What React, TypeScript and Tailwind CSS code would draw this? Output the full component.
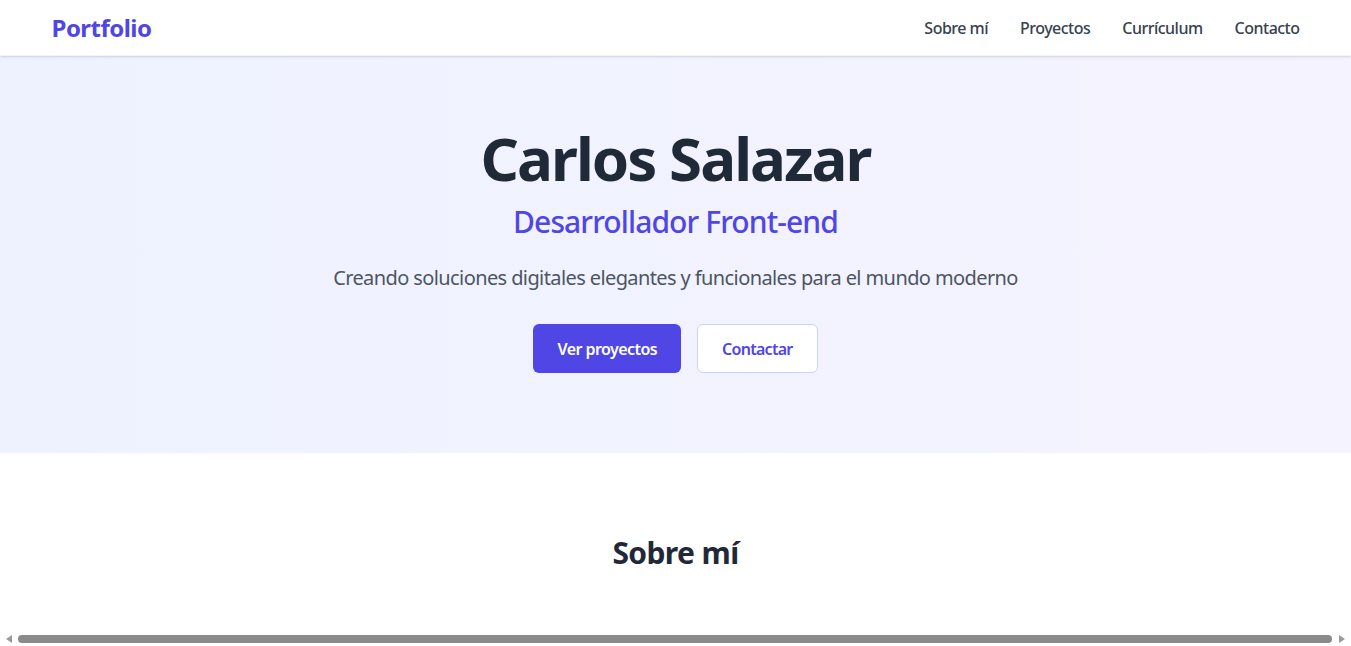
import React from "react";

const font = { fontFamily: '"Noto Sans", "Open Sans", Arial, sans-serif' };

export default function App() {
  return (
    <div style={font} className="flex h-screen flex-col overflow-hidden bg-white text-[#1f2937]">
      <div className="min-h-0 flex-1 overflow-hidden">
        <nav className="relative z-10 h-14 border-b border-gray-100 bg-white shadow-sm">
          <div className="mx-auto flex h-full max-w-7xl items-center justify-between px-4">
            <span className="text-2xl font-bold tracking-[-0.022em] text-[#4f46e5]">Portfolio</span>
            <div className="flex items-center gap-8 text-base font-medium tracking-[-0.032em] text-[#374151]">
              <a>Sobre mí</a>
              <a>Proyectos</a>
              <a>Currículum</a>
              <a>Contacto</a>
            </div>
          </div>
        </nav>

        <section className="bg-gradient-to-r from-[#eef2ff] to-[#f5f3ff] pb-20 pt-[72px]">
          <div className="mx-auto flex max-w-7xl flex-col items-center px-4 text-center">
            <h1 className="text-6xl font-bold tracking-[-0.033em] text-[#1f2937]">Carlos Salazar</h1>
            <h2 className="mt-4 text-3xl font-medium tracking-[-0.03em] text-[#4f46e5]">
              Desarrollador Front-end
            </h2>
            <p className="mt-6 text-xl tracking-[-0.03em] text-[#4b5563]">
              Creando soluciones digitales elegantes y funcionales para el mundo moderno
            </p>
            <div className="mt-8 flex gap-4">
              <button className="h-[49px] rounded-md bg-[#4f46e5] px-6 font-semibold tracking-[-0.035em] text-white">
                Ver proyectos
              </button>
              <button className="h-[49px] rounded-md border border-[#c7d2fe] bg-white px-6 font-semibold tracking-[-0.045em] text-[#4f46e5]">
                Contactar
              </button>
            </div>
          </div>
        </section>

        <section className="bg-white pb-20 pt-[82px]">
          <h2 className="text-center text-3xl font-bold tracking-[-0.02em] text-[#1f2937]">Sobre mí</h2>
        </section>
      </div>

      <div className="flex h-[14px] shrink-0 items-center bg-white">
        <div className="flex w-[18px] justify-center">
          <svg width="6" height="8" viewBox="0 0 6 8">
            <path d="M6 0 L0 4 L6 8 Z" fill="#9a9a9a" />
          </svg>
        </div>
        <div className="h-[8px] flex-1 rounded-full bg-[#8a8a8a]" />
        <div className="flex w-[19px] justify-center">
          <svg width="6" height="8" viewBox="0 0 6 8">
            <path d="M0 0 L6 4 L0 8 Z" fill="#9a9a9a" />
          </svg>
        </div>
      </div>
    </div>
  );
}
